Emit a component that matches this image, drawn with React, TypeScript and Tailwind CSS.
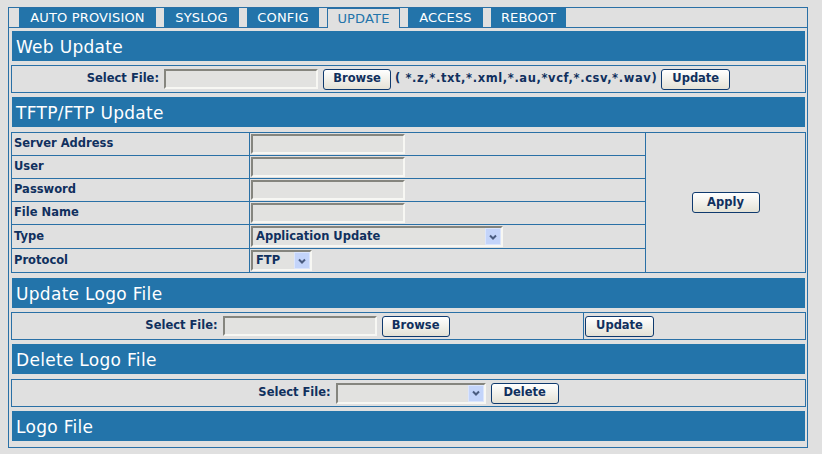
import React from 'react';

const tabs = [
  { label: 'AUTO PROVISION', w: 'w-[137px]' },
  { label: 'SYSLOG', w: 'w-[75px]' },
  { label: 'CONFIG', w: 'w-[72px]' },
  { label: 'UPDATE', w: 'w-[73px]', active: true },
  { label: 'ACCESS', w: 'w-[75px]' },
  { label: 'REBOOT', w: 'w-[75px]' },
];

const tftpRows = ['Server Address', 'User', 'Password', 'File Name'];

export default function App() {
  return (
    <div className="w-[822px] h-[454px] bg-[#e0e0e0] pl-[8px] pt-[7px] font-['DejaVu_Sans',Verdana,sans-serif] text-[#10305e]">
      <div className="w-[800px] h-[441px] border border-[#2a70a6]">
        {/* Tabs */}
        <div className="flex items-end gap-[8px] h-[20px] pl-[10px] border-b border-[#2a70a6]">
          {tabs.map((t) =>
            t.active ? (
              <div
                key={t.label}
                className={`${t.w} h-[20px] -mb-px flex items-center justify-center border-x border-t border-[#2a70a6] bg-[#e0e0e0] text-[13px] tracking-[0.15px] text-[#2374aa]`}
              >
                {t.label}
              </div>
            ) : (
              <div
                key={t.label}
                className={`${t.w} h-[19px] self-start flex items-center justify-center bg-[#2374aa] text-[13px] tracking-[0.15px] text-white`}
              >
                {t.label}
              </div>
            )
          )}
        </div>

        <div className="pl-[2px] pr-[1px] flex flex-col">
          <Header title="Web Update" className="mt-[3px]" />
          <div className="mt-[4px] h-[28px] border border-[#2a70a6] flex items-center justify-center gap-[5px] text-[11.5px] font-bold">
            <span>Select File:</span>
            <TextBox w="w-[154px]" />
            <Btn label="Browse" w="w-[68px]" />
            <span className="ml-[-1px] mr-[-1px] tracking-[0.6px]">( *.z,*.txt,*.xml,*.au,*vcf,*.csv,*.wav)</span>
            <Btn label="Update" w="w-[69px]" />
          </div>

          <Header title="TFTP/FTP Update" className="mt-[4px]" />
          <div className="mt-[5px] grid grid-cols-[238px_396px_160px] grid-rows-[23px_23px_23px_23px_24px_24px] border-l border-t border-[#2a70a6] text-[11.5px] font-bold">
            {tftpRows.map((r, i) => (
              <React.Fragment key={r}>
                <div className="border-r border-b border-[#2a70a6] flex items-center pl-[2px]">{r}</div>
                <div className="border-r border-b border-[#2a70a6] flex items-center pl-[1px]">
                  <TextBox w="w-[154px]" />
                </div>
                {i === 0 && (
                  <div className="row-span-6 border-r border-b border-[#2a70a6] flex items-center justify-center">
                    <Btn label="Apply" w="w-[68px]" />
                  </div>
                )}
              </React.Fragment>
            ))}
            <div className="border-r border-b border-[#2a70a6] flex items-center pl-[2px]">Type</div>
            <div className="border-r border-b border-[#2a70a6] flex items-center pl-[1px]">
              <SelectBox w="w-[252px]" value="Application Update" />
            </div>
            <div className="border-r border-b border-[#2a70a6] flex items-center pl-[2px]">Protocol</div>
            <div className="border-r border-b border-[#2a70a6] flex items-center pl-[1px]">
              <SelectBox w="w-[61px]" value="FTP" />
            </div>
          </div>

          <Header title="Update Logo File" className="mt-[5px]" />
          <div className="mt-[4px] h-[28px] border border-[#2a70a6] flex text-[11.5px] font-bold">
            <div className="w-[572px] border-r border-[#2a70a6] flex items-center justify-center gap-[5px]">
              <span>Select File:</span>
              <TextBox w="w-[154px]" />
              <Btn label="Browse" w="w-[68px]" />
            </div>
            <div className="flex items-center pl-[1px]">
              <Btn label="Update" w="w-[69px]" />
            </div>
          </div>

          <Header title="Delete Logo File" className="mt-[4px]" />
          <div className="mt-[5px] h-[28px] border border-[#2a70a6] flex items-center justify-center gap-[5px] text-[11.5px] font-bold">
            <span>Select File:</span>
            <SelectBox w="w-[150px]" value="" />
            <Btn label="Delete" w="w-[68px]" />
          </div>

          <Header title="Logo File" className="mt-[4px]" />
        </div>
      </div>
    </div>
  );
}

function Header({ title, className }: { title: string; className?: string }) {
  return (
    <div className={`mx-[1px] h-[30px] bg-[#2374aa] flex items-center pl-[4px] pt-[4px] text-[17px] tracking-[0.3px] text-white ${className || ''}`}>
      {title}
    </div>
  );
}

function TextBox({ w }: { w: string }) {
  return (
    <div
      className={`${w} h-[20px] border-2 border-t-[#85857e] border-l-[#85857e] border-b-[#f7f7f3] border-r-[#f7f7f3] bg-[#e2e2e0]`}
    />
  );
}

function SelectBox({ w, value }: { w: string; value: string }) {
  return (
    <div
      className={`${w} h-[21px] flex items-center justify-between border-2 border-t-[#85857e] border-l-[#85857e] border-b-[#f7f7f3] border-r-[#f7f7f3] bg-[#e2e2e0]`}
    >
      <span className="pl-[3px] text-[11.5px] font-bold leading-none whitespace-nowrap">{value}</span>
      <span className="w-[16px] h-[17px] flex items-center justify-center bg-[#c3d4fa] border border-[#dbe5fc]">
        <svg width="10" height="8" viewBox="0 0 10 8">
          <path d="M2 2.5 L5 5.5 L8 2.5" fill="none" stroke="#4a5c80" strokeWidth="2" />
        </svg>
      </span>
    </div>
  );
}

function Btn({ label, w }: { label: string; w: string }) {
  return (
    <button
      className={`${w} h-[21px] rounded-[3px] border border-[#0f3a6e] bg-linear-to-b from-white to-[#e4e2d6] text-[11.5px] font-bold text-[#10305e] leading-none`}
    >
      {label}
    </button>
  );
}
